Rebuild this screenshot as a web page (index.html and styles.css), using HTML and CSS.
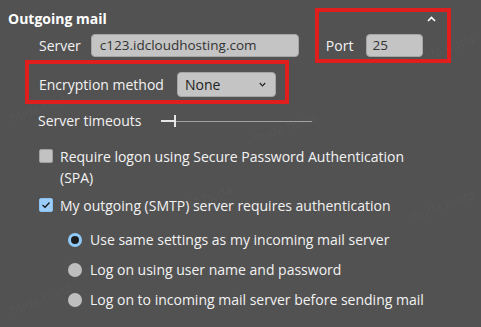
FILE: index.html
```html
<!DOCTYPE html>
<html>
<head>
<meta charset="utf-8">
<link rel="stylesheet" href="styles.css">
</head>
<body>
<div class="panel">
  <div class="head">
    <span class="title">Outgoing mail</span>
    <svg class="caret" width="9" height="6" viewBox="0 0 9 6"><path d="M1 5 L4.5 1.5 L8 5" fill="none" stroke="#ffffff" stroke-width="1.6"/></svg>
  </div>
  <div class="row server-row">
    <span class="lbl">Server</span>
    <div class="field server-field">c123.idcloudhosting.com</div>
    <span class="lbl port-lbl">Port</span>
    <div class="field port-field">25</div>
  </div>
  <div class="row enc-row">
    <span class="lbl">Encryption method</span>
    <div class="select"><span>None</span><svg width="7" height="5" viewBox="0 0 7 5"><path d="M0.8 1 L3.5 3.8 L6.2 1" fill="none" stroke="#222" stroke-width="1.2"/></svg></div>
  </div>
  <div class="row timeout-row">
    <span class="lbl">Server timeouts</span>
    <div class="slider"><span class="fill"></span><span class="thumb"></span><span class="track"></span></div>
  </div>
  <div class="check-row first">
    <span class="cb"></span>
    <span class="ctext">Require logon using Secure Password Authentication<br>(SPA)</span>
  </div>
  <div class="check-row second">
    <span class="cb checked"><svg width="10" height="8" viewBox="0 0 10 8"><path d="M1.5 4 L4 6.3 L8.5 1.5" fill="none" stroke="#1a1a1a" stroke-width="1.3"/></svg></span>
    <span class="ctext">My outgoing (SMTP) server requires authentication</span>
  </div>
  <div class="radios">
    <div class="radio-row"><span class="rb on"></span><span>Use same settings as my incoming mail server</span></div>
    <div class="radio-row"><span class="rb"></span><span>Log on using user name and password</span></div>
    <div class="radio-row"><span class="rb"></span><span>Log on to incoming mail server before sending mail</span></div>
  </div>

  <span class="wm wm1">huda huda</span>
  <span class="wm wm2">huda huda</span>
  <span class="wm wm3">huda huda</span>
  <span class="wm wm4">huda huda</span>
  <span class="wm wm5">huda huda</span>
  <span class="wm wm6">huda huda</span>

  <div class="hl hl-port"></div>
  <div class="hl hl-enc"></div>
</div>
</body>
</html>
```

FILE: styles.css
```css
* { box-sizing: border-box; }
html, body {
  margin: 0;
  padding: 0;
  background: #525252;
}
body {
  width: 481px;
  height: 327px;
  overflow: hidden;
  font-family: "Open Sans", "Noto Sans", sans-serif;
  font-size: 14px;
  color: #f2f2f2;
}
.panel {
  position: relative;
  width: 481px;
  height: 327px;
}
.head {
  display: flex;
  align-items: flex-start;
  justify-content: space-between;
  padding: 8px 45px 0 8px;
  height: 30px;
}
.title {
  font-weight: 700;
  font-size: 14px;
  line-height: 22px;
  color: #ffffff;
}
.caret { margin-top: 8px; }
.row {
  display: flex;
  align-items: center;
  padding-left: 39px;
}
.lbl { line-height: 20px; white-space: nowrap; }
.server-row { margin-top: 4px; height: 23px; }
.field {
  height: 23px;
  background: #c4c4c4;
  border: 1px solid #a5a5a5;
  border-radius: 4px;
  color: #333333;
  font-size: 13.5px;
  line-height: 21px;
  padding-left: 8px;
}
.server-field { width: 208px; margin-left: 10px; }
.port-lbl { margin-left: 27px; }
.port-field { width: 57px; margin-left: 13px; padding-left: 5px; }
.enc-row { margin-top: 15px; height: 25px; }
.select {
  display: flex;
  align-items: center;
  justify-content: space-between;
  width: 99px;
  height: 25px;
  margin-left: 13px;
  padding: 0 9px 0 7px;
  background: #c4c4c4;
  border: 1px solid #a5a5a5;
  border-radius: 4px;
  color: #222222;
  font-size: 14px;
}
.timeout-row { margin-top: 14px; height: 20px; padding-left: 38px; }
.slider {
  display: flex;
  align-items: center;
  margin-left: 19px;
  height: 20px;
}
.fill { width: 13px; height: 2px; background: #e6e6e6; }
.thumb { width: 2px; height: 12px; background: #e6e6e6; }
.track { width: 136px; height: 1px; background: #a0a0a0; }
.check-row {
  display: flex;
  align-items: flex-start;
  padding-left: 39px;
  line-height: 21px;
}
.check-row.first { margin-top: 15px; }
.check-row.second { margin-top: 7px; }
.cb {
  flex: none;
  width: 14px;
  height: 14px;
  margin-top: 3px;
  margin-right: 7px;
  background: #c2c2c2;
  border: 1px solid #a0a0a0;
  border-radius: 2px;
  display: flex;
  align-items: center;
  justify-content: center;
}
.cb.checked { background: #9bcdf8; border-color: #8cc0ee; }
.radios {
  display: flex;
  flex-direction: column;
  gap: 9px;
  margin-top: 13px;
  padding-left: 68px;
}
.radio-row {
  display: flex;
  align-items: center;
  height: 21px;
  line-height: 21px;
}
.rb {
  flex: none;
  width: 14px;
  height: 14px;
  border-radius: 50%;
  background: #bebebe;
  margin-right: 8px;
}
.rb.on {
  background: #1c1c1c;
  border: 3px solid #8fc9f7;
}
.hl {
  position: absolute;
  border: 4px solid #e01e1e;
}
.hl-port { left: 315px; top: 8px; width: 136px; height: 55px; }
.hl-enc { left: 25px; top: 60px; width: 264px; height: 44px; }
.wm {
  position: absolute;
  font-size: 13px;
  color: rgba(255, 255, 255, 0.04);
  transform: rotate(-20deg);
  white-space: nowrap;
}
.wm1 { left: 410px; top: 40px; }
.wm2 { left: 8px; top: 98px; }
.wm3 { left: 252px; top: 118px; }
.wm4 { left: 168px; top: 190px; }
.wm5 { left: 410px; top: 196px; }
.wm6 { left: 8px; top: 290px; }
```
